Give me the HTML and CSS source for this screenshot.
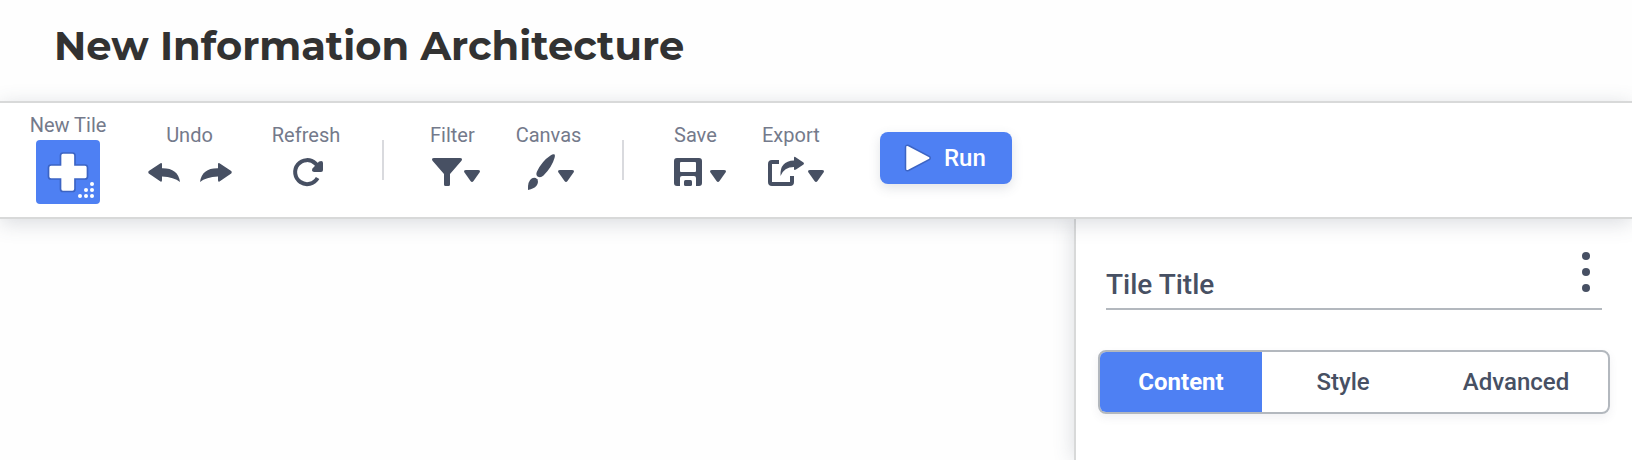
FILE: index.html
```html
<!DOCTYPE html>
<html lang="en">
<head>
<meta charset="utf-8">
<title>New Information Architecture</title>
<link rel="stylesheet" href="styles.css">
</head>
<body>
<header class="header"><h1 class="title">New Information Architecture</h1></header>
<nav class="toolbar">
  <button class="tool tool-new">
    <span class="label">New Tile</span>
    <svg class="icon" width="64" height="64" viewBox="36 140 64 64">
      <rect x="36" y="140" width="64" height="64" rx="4" fill="#4e80f3"/>
      <path d="M63 153H72.500Q75 153 75 155.500V165H85Q87.500 165 87.500 167.500V176.500Q87.500 179 85 179H75V189Q75 191.500 72.500 191.500H63Q60.500 191.500 60.500 189V179H51Q48.500 179 48.500 176.500V167.500Q48.500 165 51 165H60.500V155.500Q60.500 153 63 153Z" fill="#fff" stroke="#3c64c4" stroke-width="1.700"/>
      <g fill="#fff"><circle cx="92" cy="184" r="2"/><circle cx="86" cy="190" r="2"/><circle cx="92" cy="190" r="2"/><circle cx="80" cy="196" r="2"/><circle cx="86" cy="196" r="2"/><circle cx="92" cy="196" r="2"/></g>
    </svg>
  </button>
  <button class="tool tool-undo">
    <span class="label">Undo</span>
    <svg class="icon" width="84" height="40" viewBox="148 152 84 40">
      <path id="arrow" d="M148.800 171L160.500 163.300Q162 162.500 162 164.500V168.300Q178 168 180 182Q174 177 162 176.500V180Q162 182.300 160.500 181.500L148.800 173.500Q147.800 172.200 148.800 171Z"/>
      <use href="#arrow" transform="matrix(-1 0 0 1 380 0)"/>
    </svg>
  </button>
  <button class="tool tool-refresh">
    <span class="label">Refresh</span>
    <svg class="icon" width="32" height="40" viewBox="292 152 32 40">
      <path d="M317.600 178A12 12 0 1 1 315.500 163.500L317 165" fill="none" stroke="#475063" stroke-width="4"/>
      <path d="M312.500 168.500L319 161.500Q323 160 323 163V170Q323 172 321 172H314Q311 171.500 312.500 168.500Z"/>
    </svg>
  </button>
  <span class="divider divider-first"></span>
  <button class="tool tool-filter">
    <span class="label">Filter</span>
    <svg class="icon" width="50" height="40" viewBox="431 152 50 40">
      <path d="M434 158H460Q463 158.200 461.500 160.800L450 174V184.500Q450 186 448.500 186H445.500Q444 186 444 184.500V174L432.500 160.800Q431 158.200 434 158Z"/>
      <path d="M466 170H478Q481 170.300 479.500 172.500L473.500 181Q472 182.800 470.500 181L464.500 172.500Q463 170.300 466 170Z"/>
    </svg>
  </button>
  <button class="tool tool-canvas">
    <span class="label">Canvas</span>
    <svg class="icon" width="50" height="40" viewBox="526 152 50 40">
      <path d="M554 154.200Q555.500 154.500 554.500 158Q552 167 543.500 175.500Q540.500 178.500 537.500 176.500Q535.500 174.500 537 171.500Q542 161 550.500 155.500Q552.500 154 554 154.200Z"/>
      <path d="M528 190Q527.500 181 532 178.300Q535 177 537.300 179.300Q539 182 536.500 185.800Q534 188.800 528 190Z"/>
      <path d="M560 170H572Q575 170.300 573.500 172.500L567.500 181Q566 182.800 564.500 181L558.500 172.500Q557 170.300 560 170Z"/>
    </svg>
  </button>
  <span class="divider divider-second"></span>
  <button class="tool tool-save">
    <span class="label">Save</span>
    <svg class="icon" width="54" height="40" viewBox="673 152 54 40">
      <path fill-rule="evenodd" d="M677 158H699Q702 158 702 161V183Q702 186 699 186H696V178Q696 176 694 176H682Q680 176 680 178V186H677Q674 186 674 183V161Q674 158 677 158ZM681 162Q680 162 680 163V171Q680 172 681 172H695Q696 172 696 171V163Q696 162 695 162Z"/>
      <rect x="684" y="180" width="8" height="6" rx="1.500"/>
      <path d="M712 170H724Q727 170.300 725.500 172.500L719.500 181Q718 182.800 716.500 181L710.500 172.500Q709 170.300 712 170Z"/>
    </svg>
  </button>
  <button class="tool tool-export">
    <span class="label">Export</span>
    <svg class="icon" width="58" height="40" viewBox="767 152 58 40">
      <path d="M779 162H772Q770 162 770 164V182Q770 184 772 184H790Q792 184 792 182V176" fill="none" stroke="#475063" stroke-width="4"/>
      <path d="M780.500 176Q779.500 161 794 160.500V158Q794 156 796 157.500L803.500 162.500Q804.500 163.500 803.500 164.500L796 169.500Q794 170.500 794 169V167Q784 167 780.500 176Z"/>
      <path d="M810 170H822Q825 170.300 823.500 172.500L817.500 181Q816 182.800 814.500 181L808.500 172.500Q807 170.300 810 170Z"/>
    </svg>
  </button>
  <button class="run">
    <svg class="run-icon" width="28" height="28" viewBox="904 144 28 28"><path d="M908.500 145.500L929.500 156.500Q931 158 929.500 159.500L908.500 170.500Q905.500 171.500 905.500 168.500V147.500Q905.500 144.500 908.500 145.500Z" fill="#fff" stroke="#3c64c4" stroke-width="1.500"/></svg>
    <span>Run</span>
  </button>
</nav>
<main class="workspace">
  <section class="canvas"></section>
  <aside class="panel">
    <div class="tile-head">
      <h2 class="tile-title">Tile Title</h2>
      <svg class="more" width="8" height="40" viewBox="0 0 8 40"><circle cx="4" cy="4" r="4"/><circle cx="4" cy="20" r="4"/><circle cx="4" cy="36" r="4"/></svg>
    </div>
    <div class="tabs">
      <button class="tab tab-active">Content</button>
      <button class="tab">Style</button>
      <button class="tab tab-wide">Advanced</button>
    </div>
  </aside>
</main>
</body>
</html>
```
FILE: styles.css
```css
* { box-sizing: border-box; }
body { margin: 0; height: 460px; overflow: hidden; background: #fefefe; font-family: Roboto, sans-serif; color: #475063; display: flex; flex-direction: column; }
button { border: 0; background: none; padding: 0; margin: 0; font: inherit; color: inherit; }
.header { flex: 0 0 101px; padding: 22px 0 0 54px; }
.title { margin: 0; font: 700 40px/48px Montserrat, Inter, sans-serif; color: #323232; white-space: nowrap; }
.toolbar { position: relative; z-index: 1; flex: 0 0 118px; display: flex; align-items: flex-start; background: #fff; border-top: 2px solid #d8d9d9; border-bottom: 2px solid #d8d9d9; box-shadow: 0 4px 20px rgba(71, 80, 99, .2); }
.tool { display: flex; flex-direction: column; align-items: center; flex: none; margin-top: 20px; }
.label { font-size: 20px; line-height: 24px; height: 29px; color: #747a8b; white-space: nowrap; }
.icon { display: block; fill: #475063; flex: none; }
.tool-new { width: 78px; margin: 10px 0 0 29px; }
.tool-new .label { height: 27px; }
.tool-undo { width: 84px; margin-left: 41px; }
.tool-undo .label { margin-right: 1px; }
.tool-refresh { width: 68px; margin-left: 40px; }
.tool-refresh .icon { margin-left: 3px; }
.divider { width: 2px; height: 40px; margin-top: 37px; background: #d9dade; flex: none; }
.divider-first { margin-left: 42px; }
.divider-second { margin-left: 40px; }
.tool-filter { width: 50px; align-items: flex-start; margin-left: 47px; }
.tool-filter .label { margin-left: -1px; }
.tool-canvas { width: 66px; margin-left: 35px; }
.tool-canvas .label { margin-right: 1px; }
.tool-canvas .icon { margin-left: 4px; }
.tool-save { width: 54px; align-items: flex-start; margin-left: 49px; }
.tool-save .label { margin-left: 1px; }
.tool-export { width: 66px; align-items: flex-start; margin-left: 35px; }
.tool-export .icon { margin-left: 5px; }
.run { display: flex; align-items: center; width: 132px; height: 52px; margin: 29px 0 0 52px; padding-left: 24px; gap: 12px; border-radius: 8px; background: #4e80f3; color: #fff; font-size: 24px; font-weight: 500; box-shadow: 0 4px 12px rgba(71, 80, 99, .16); }
.run-icon { flex: none; }
.workspace { flex: 1; display: flex; }
.canvas { flex: 1; }
.panel { width: 558px; padding: 34px 22px 0; background: #fff; border-left: 2px solid #d8d9d9; box-shadow: 0 0 20px rgba(71, 80, 99, .2); }
.tile-head { display: flex; justify-content: space-between; height: 57px; margin: 0 8px; padding-right: 12px; border-bottom: 2px solid #b3b8be; }
.tile-title { margin: 15px 0 0; font-size: 28px; line-height: 34px; font-weight: 500; }
.more { margin-top: -1px; fill: #475063; }
.tabs { display: flex; height: 64px; margin-top: 40px; border: 2px solid #b3b8be; border-radius: 8px; overflow: hidden; box-shadow: 0 4px 8px rgba(71, 80, 99, .08); }
.tab { width: 162px; font-size: 24px; font-weight: 500; }
.tab-active { background: #4e80f3; color: #fff; font-weight: 700; }
.tab-wide { width: 184px; }
```
